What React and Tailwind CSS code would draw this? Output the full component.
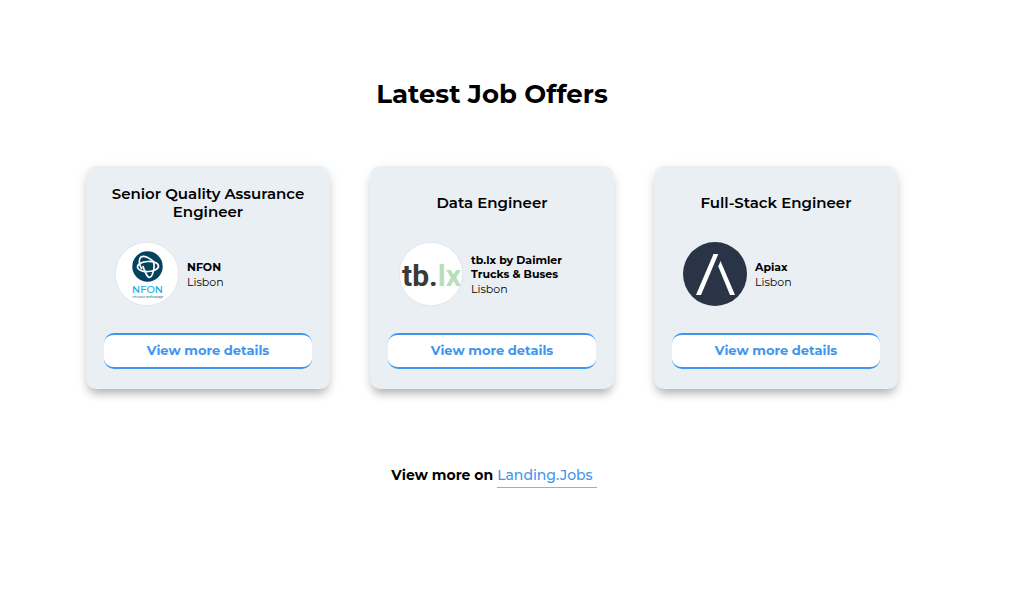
function NfonLogo() {
  return (
    <svg viewBox="0 0 64 64" className="size-full" role="img" aria-label="NFON logo">
      <circle cx="32" cy="32" r="31.7" fill="#ffffff" stroke="#d6dadd" strokeWidth="0.6" />
      <circle cx="32.5" cy="24.5" r="15.2" fill="#04425f" />
      <g fill="none" stroke="#ffffff" strokeWidth="1.7" strokeLinecap="round">
        <ellipse cx="33" cy="24.5" rx="10.5" ry="5" transform="rotate(-3 33 24.5)" />
        <path d="M38.500 19.500c1 4 .5 9-1.200 13-1.300 3.600-3.800 3.800-5.600.5-1.400-2.600-2.600-5-3.700-8.500" />
        <path d="M38.500 19.500C35 15.800 29 13.200 26 15c-2.600 1.800-2.200 7 .5 11.500" />
      </g>
      <text x="32.5" y="50.5" textAnchor="middle" fontFamily="Montserrat, Inter, sans-serif" fontSize="10" fontWeight="500" fill="#22a7dc">
        NFON
      </text>
      <text x="32.5" y="55.5" textAnchor="middle" fontFamily="Inter, sans-serif" fontSize="2.6" fontWeight="500" fill="#4a7183">
        The Cloud Telefonanlage
      </text>
    </svg>
  );
}

function TblxLogo() {
  return (
    <svg viewBox="0 0 64 64" className="size-full" role="img" aria-label="tb.lx logo">
      <circle cx="32" cy="32" r="31.7" fill="#ffffff" stroke="#d6dadd" strokeWidth="0.6" />
      <text x="32.5" y="44" textAnchor="middle" fontFamily="Roboto, sans-serif" fontSize="30" fontWeight="700">
        <tspan fill="#393b3a">tb.</tspan>
        <tspan fill="#b9dfba">lx</tspan>
      </text>
    </svg>
  );
}

function ApiaxLogo() {
  return (
    <svg viewBox="0 0 64 64" className="size-full" role="img" aria-label="Apiax logo">
      <circle cx="32" cy="32" r="32" fill="#2a3447" />
      <path fill="#ffffff" d="M30.500 12h4.800L18 53h-5Z" />
      <path fill="#ffffff" d="M37.500 19 52 53h-5L35.300 24.500Z" />
    </svg>
  );
}

const jobs = [
  { title: "Senior Quality Assurance Engineer", company: "NFON", city: "Lisbon", Logo: NfonLogo },
  { title: "Data Engineer", company: "tb.lx by Daimler Trucks & Buses", city: "Lisbon", Logo: TblxLogo },
  { title: "Full-Stack Engineer", company: "Apiax", city: "Lisbon", Logo: ApiaxLogo },
];

function JobCard({ title, company, city, Logo }) {
  return (
    <article className="flex w-61 flex-col rounded-[10px] bg-[#eaeff3] px-4.5 pt-4.5 pb-5 shadow-[0_7px_10px_-3px_rgba(0,0,0,0.28),0_3px_14px_rgba(0,0,0,0.07)]">
      <h2 className="flex h-9.5 items-center justify-center text-center text-[15px] leading-4.5 font-semibold">
        {title}
      </h2>
      <div className="mt-5 flex items-center gap-2 pl-[11px]">
        <div className="size-16 shrink-0">
          <Logo />
        </div>
        <div className="w-26 text-[11px] leading-3.5">
          <p className="font-bold">{company}</p>
          <p className="mt-px">{city}</p>
        </div>
      </div>
      <button
        type="button"
        className="mt-[27px] h-9 rounded-[10px] border-y-2 border-[#4295ec] bg-white text-[13px] font-bold text-[#4295ec]"
      >
        View more details
      </button>
    </article>
  );
}

export default function App() {
  return (
    <main className="bg-white pt-19 pr-10 pb-16 font-['Montserrat','Inter',sans-serif] text-black">
      <h1 className="text-center text-[26px] leading-9 font-bold">Latest Job Offers</h1>
      <section className="mt-13.5 flex flex-wrap justify-center gap-10">
        {jobs.map((job) => (
          <JobCard key={job.title} {...job} />
        ))}
      </section>
      <p className="mt-18.5 pl-1 text-center text-[14px] leading-6 font-bold">
        View more on{" "}
        <a href="#landing-jobs" className="inline-block border-b border-[#7db5f1] pr-1 font-medium text-[#4295ec]">
          Landing.Jobs
        </a>
      </p>
    </main>
  );
}
